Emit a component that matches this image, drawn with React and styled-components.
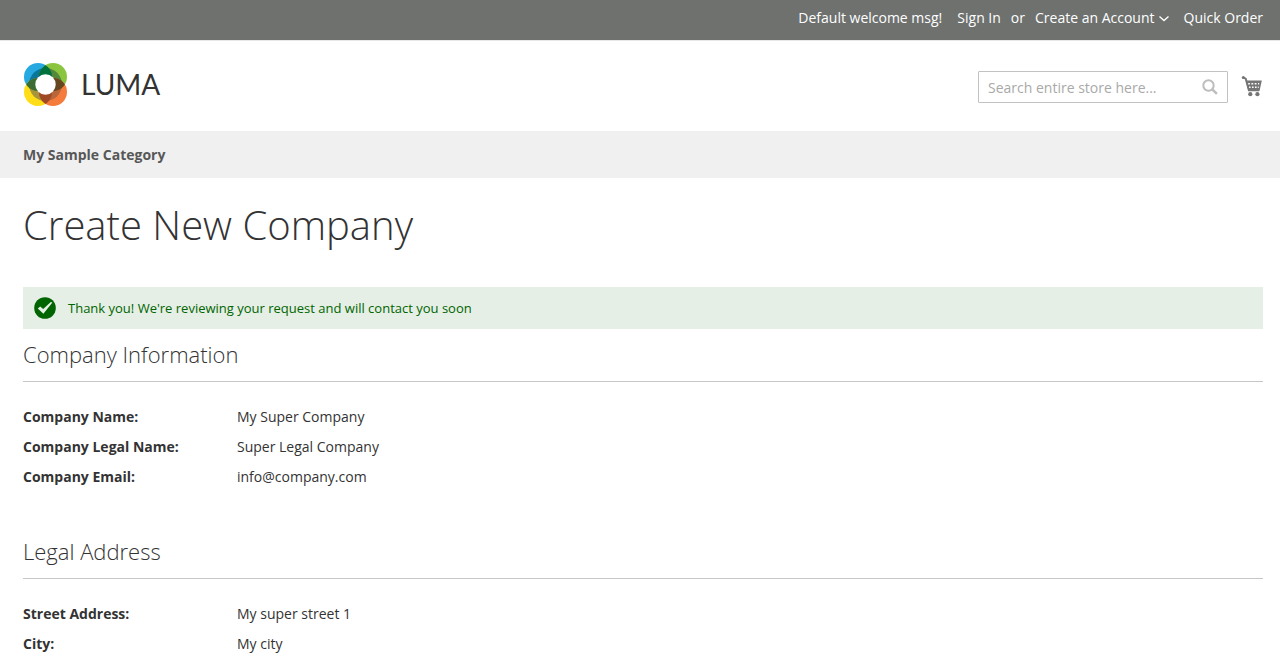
import React from "react";
import { useState } from "react";
import styled, { createGlobalStyle } from "styled-components";

const GlobalStyle = createGlobalStyle`
  * {
    box-sizing: border-box;
  }

  body {
    margin: 0;
    background-color: #ffffff;
    color: #333333;
    font-family: 'Open Sans', 'Noto Sans', sans-serif;
    font-size: 14px;
    line-height: 20px;
  }
`;

const PanelDiv = styled.div`
  display: flex;
  justify-content: flex-end;
  height: 41px;
  padding: 8px 17px 0 23px;
  background-color: #6e716e;
  border-bottom: 1px solid #e8e8e8;
  color: #ffffff;
`;

const PanelList = styled.ul`
  display: flex;
  gap: 15px;
  margin: 0;
  padding: 0;
  list-style: none;
`;

const PanelItem = styled.li`
  display: flex;
  align-items: center;
  gap: ${(props) => props.$gap || "0"};
  height: 20px;
`;

const PanelLink = styled.a`
  color: #ffffff;
  text-decoration: none;

  &:hover {
    text-decoration: underline;
  }
`;

const SwitchButton = styled.button`
  display: flex;
  align-items: center;
  padding: 0;
  border: 0;
  background: none;
  color: #ffffff;
  cursor: pointer;
`;

const HeaderDiv = styled.header`
  display: flex;
  align-items: flex-start;
  justify-content: space-between;
  padding: 21px 17px 25px 23px;
`;

const LogoLink = styled.a`
  display: flex;
  align-items: center;
  gap: 13px;
  color: #333333;
  font-family: Lato, 'Open Sans', sans-serif;
  font-size: 28px;
  line-height: 44px;
  text-decoration: none;
`;

const HeaderTools = styled.div`
  display: flex;
  align-items: center;
  gap: 13px;
  padding-top: 9px;
`;

const SearchForm = styled.form`
  display: flex;
  align-items: center;
  width: 250px;
  height: 32px;
  border: 1px solid #c2c2c2;
  border-radius: 1px;
`;

const SearchInput = styled.input`
  flex: 1;
  min-width: 0;
  padding: 0 9px;
  border: 0;
  outline: 0;
  background: none;
  color: #333333;
  font-family: inherit;
  font-size: 14px;

  &::placeholder {
    color: #a9a9a9;
    opacity: 1;
  }
`;

const IconButton = styled.button`
  display: flex;
  padding: ${(props) => props.$padding || "0"};
  border: 0;
  background: none;
  cursor: pointer;
`;

const NavDiv = styled.nav`
  padding: 14px 23px 13px;
  background-color: #f0f0f0;
`;

const NavLink = styled.a`
  color: #575757;
  font-weight: 700;
  text-decoration: none;
`;

const MainContents = styled.main`
  padding: 25px 17px 0 23px;
`;

const PageTitle = styled.h1`
  margin: 0 0 40px;
  font-size: 40px;
  font-weight: 300;
  line-height: 44px;
`;

const MessageDiv = styled.div`
  display: flex;
  align-items: center;
  gap: 12px;
  min-height: 42px;
  padding: 10px 11px;
  background-color: #e5efe5;
  color: #006400;
  font-size: 13px;
`;

const InfoSection = styled.section`
  & + & {
    margin-top: 34px;
  }
`;

const SectionTitle = styled.h2`
  margin: 0 0 20px;
  padding: 11px 0 13px;
  border-bottom: 1px solid #c6c6c6;
  font-size: 22px;
  font-weight: 300;
  line-height: 28px;
`;

const InfoTable = styled.table`
  width: 100%;
  border-collapse: collapse;

  th,
  td {
    padding: 5px 0;
    text-align: left;
    vertical-align: top;
  }

  th {
    width: 214px;
    font-weight: 700;
  }
`;

const LumaMark = () => (
  <svg width="45" height="44" viewBox="0 0 45 44" aria-hidden="true">
    <defs>
      <clipPath id="left-top">
        <circle cx="15" cy="15" r="14" />
      </clipPath>
      <clipPath id="right-top">
        <circle cx="30" cy="15" r="14" />
      </clipPath>
      <clipPath id="left-bottom">
        <circle cx="15" cy="30" r="14" />
      </clipPath>
      <clipPath id="right-bottom">
        <circle cx="30" cy="30" r="14" />
      </clipPath>
    </defs>
    <circle cx="15" cy="15" r="14" fill="#26a9e0" />
    <circle cx="30" cy="15" r="14" fill="#8bc53f" />
    <circle cx="15" cy="30" r="14" fill="#ffde17" />
    <circle cx="30" cy="30" r="14" fill="#f47b3c" />
    <circle cx="22.5" cy="22.5" r="16.5" fill="#0b769c" clipPath="url(#left-top)" />
    <circle cx="22.5" cy="22.5" r="16.5" fill="#55873a" clipPath="url(#right-top)" />
    <circle cx="22.5" cy="22.5" r="16.5" fill="#a8943a" clipPath="url(#left-bottom)" />
    <circle cx="22.5" cy="22.5" r="16.5" fill="#b9673a" clipPath="url(#right-bottom)" />
    <circle cx="15" cy="15" r="14" fill="#3b6c34" clipPath="url(#left-bottom)" />
    <circle cx="30" cy="30" r="14" fill="#65461f" clipPath="url(#right-top)" />
    <circle cx="15" cy="30" r="14" fill="#a04a25" clipPath="url(#right-bottom)" />
    <circle cx="15" cy="15" r="14" fill="#00703c" clipPath="url(#right-top)" />
    <circle cx="22.5" cy="22.5" r="10.2" fill="#ffffff" />
  </svg>
);

const ChevronIcon = () => (
  <svg width="14" height="10" viewBox="0 0 14 10" aria-hidden="true">
    <path d="M4.5 3.5L9 7.5l4.5-4" fill="none" stroke="currentColor" strokeWidth="1.4" />
  </svg>
);

const SearchIcon = () => (
  <svg width="16" height="16" viewBox="0 0 16 16" aria-hidden="true">
    <circle cx="6.5" cy="6.5" r="5.2" fill="none" stroke="#bdbdbd" strokeWidth="2" />
    <path d="M10.3 10.3l4.6 4.6" stroke="#bdbdbd" strokeWidth="2.4" />
  </svg>
);

const CartIcon = () => (
  <svg width="22" height="22" viewBox="0 0 22 22" aria-hidden="true">
    <circle cx="2.3" cy="1.6" r="1.5" fill="#757575" />
    <path d="M2 1.4l2.7 1.2 3.2 11.6h10.3" fill="none" stroke="#757575" strokeWidth="2" />
    <path d="M4.6 4.4H20.8l-2.2 10.4H7.4z" fill="#757575" />
    <path
      d="M7.2 7.7h1.7M10.4 7.7h1.8M13.7 7.7h1.8M17 7.7h1.2M8.1 11.2h1.5M11 11.2h1.6M14 11.2h1.6M16.8 11.2h0.9"
      stroke="#ffffff"
      strokeWidth="1.6"
    />
    <circle cx="9.3" cy="18.2" r="2.1" fill="#757575" />
    <circle cx="16.4" cy="18.2" r="2.1" fill="#757575" />
  </svg>
);

const SuccessIcon = () => (
  <svg width="22" height="22" viewBox="0 0 22 22" aria-hidden="true">
    <circle cx="11" cy="11" r="10.8" fill="#006400" />
    <path d="M3.8 11.6l2.4-2 3 2.5 7.6-7 1.6.4-9 11.2z" fill="#e5efe5" />
  </svg>
);

const sections = [
  {
    title: "Company Information",
    rows: [
      ["Company Name:", "My Super Company"],
      ["Company Legal Name:", "Super Legal Company"],
      ["Company Email:", "info@company.com"],
    ],
  },
  {
    title: "Legal Address",
    rows: [
      ["Street Address:", "My super street 1"],
      ["City:", "My city"],
    ],
  },
];

const App = () => {
  const [search, setSearch] = useState("");

  return (
    <React.Fragment>
      <GlobalStyle />
      <PanelDiv>
        <PanelList>
          <PanelItem>Default welcome msg!</PanelItem>
          <PanelItem $gap="10px">
            <PanelLink href="#login">Sign In</PanelLink>
            <span>or</span>
            <PanelItem as="span">
              <PanelLink href="#create">Create an Account</PanelLink>
              <SwitchButton type="button" aria-label="Account options">
                <ChevronIcon />
              </SwitchButton>
            </PanelItem>
          </PanelItem>
          <PanelItem>
            <PanelLink href="#quickorder">Quick Order</PanelLink>
          </PanelItem>
        </PanelList>
      </PanelDiv>
      <HeaderDiv>
        <LogoLink href="#home">
          <LumaMark />
          <span>LUMA</span>
        </LogoLink>
        <HeaderTools>
          <SearchForm onSubmit={(e) => e.preventDefault()}>
            <SearchInput
              type="text"
              aria-label="Search"
              placeholder="Search entire store here..."
              value={search}
              onChange={(e) => setSearch(e.target.value)}
            />
            <IconButton type="submit" aria-label="Search" $padding="0 9px">
              <SearchIcon />
            </IconButton>
          </SearchForm>
          <IconButton type="button" aria-label="My Cart">
            <CartIcon />
          </IconButton>
        </HeaderTools>
      </HeaderDiv>
      <NavDiv>
        <NavLink href="#category">My Sample Category</NavLink>
      </NavDiv>
      <MainContents>
        <PageTitle>Create New Company</PageTitle>
        <MessageDiv role="alert">
          <SuccessIcon />
          <span>Thank you! We're reviewing your request and will contact you soon</span>
        </MessageDiv>
        {sections.map((section) => (
          <InfoSection key={section.title}>
            <SectionTitle>{section.title}</SectionTitle>
            <InfoTable>
              <tbody>
                {section.rows.map(([label, value]) => (
                  <tr key={label}>
                    <th scope="row">{label}</th>
                    <td>{value}</td>
                  </tr>
                ))}
              </tbody>
            </InfoTable>
          </InfoSection>
        ))}
      </MainContents>
    </React.Fragment>
  );
};

export default App;
